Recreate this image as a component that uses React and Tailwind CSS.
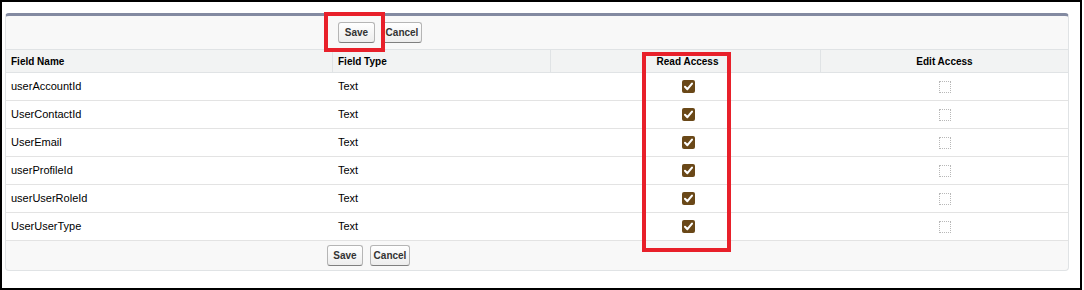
import React from "react"

const fields = [
  { name: "userAccountId", type: "Text" },
  { name: "UserContactId", type: "Text" },
  { name: "UserEmail", type: "Text" },
  { name: "userProfileId", type: "Text" },
  { name: "userUserRoleId", type: "Text" },
  { name: "UserUserType", type: "Text" },
]

const Btn = ({ children, w }) => (
  <button
    type="button"
    className={`${w} h-[21px] rounded-[3px] border border-[#b5b5b5] border-b-[#7f7f7f] bg-gradient-to-b from-white to-[#ededed] text-[10px] font-bold text-[#333] flex items-center justify-center`}
  >
    {children}
  </button>
)

const CheckedBox = () => (
  <svg width="13" height="13" viewBox="0 0 13 13">
    <rect x="0" y="0" width="13" height="13" rx="2" fill="#6a4818" />
    <path d="M3 6.8 L5.4 9.2 L10 3.6" fill="none" stroke="#fff" strokeWidth="2.1" strokeLinecap="round" strokeLinejoin="round" />
  </svg>
)

const DisabledBox = () => <div className="w-[12px] h-[12px] border border-dotted border-[#b8b8b8]" />

export default function App() {
  return (
    <div
      className="relative w-[1082px] h-[290px] border-2 border-black bg-white pl-[3px] pt-[11px]"
      style={{ fontFamily: '"Liberation Sans", Arial, sans-serif' }}
    >
      {/* Panel */}
      <div className="w-[1064px] rounded-[4px] border border-[#e0e3e5] border-t-[3px] border-t-[#838aa1] bg-[#f8f8f8] overflow-hidden">
        {/* Top buttons */}
        <div className="h-[34px] border-b border-[#e0e3e5] flex items-start pt-[6px] pl-[332px] gap-[7px]">
          <Btn w="w-[37px]">Save</Btn>
          <Btn w="w-[40px]">Cancel</Btn>
        </div>

        {/* Header */}
        <div className="grid grid-cols-[327px_218px_270px_1fr] h-[23px] bg-[#f2f3f3] border-b border-[#e0e3e5] text-[10px] font-bold text-black">
          <div className="flex items-center pl-[5px] border-r border-[#e0e3e5]">Field Name</div>
          <div className="flex items-center pl-[5px] border-r border-[#e0e3e5]">Field Type</div>
          <div className="flex items-center justify-center pl-[4px] border-r border-[#e0e3e5]">Read Access</div>
          <div className="flex items-center justify-center">Edit Access</div>
        </div>

        {/* Rows */}
        {fields.map((f) => (
          <div
            key={f.name}
            className="grid grid-cols-[327px_218px_270px_1fr] h-[28px] bg-white border-b border-[#e3e3e3] text-[11px] text-black"
          >
            <div className="flex items-center pl-[5px]">{f.name}</div>
            <div className="flex items-center pl-[5px]">{f.type}</div>
            <div className="flex items-center justify-center pl-[4px]">
              <CheckedBox />
            </div>
            <div className="flex items-center justify-center">
              <DisabledBox />
            </div>
          </div>
        ))}

        {/* Bottom buttons */}
        <div className="h-[29px] flex items-start pt-[4px] pl-[321px] gap-[7px]">
          <Btn w="w-[36px]">Save</Btn>
          <Btn w="w-[40px]">Cancel</Btn>
        </div>
      </div>

      {/* Red highlight boxes */}
      <div className="absolute left-[322px] top-[10px] w-[61px] h-[40px] border-4 border-[#e8202a] pointer-events-none" />
      <div className="absolute left-[640px] top-[50px] w-[89px] h-[200px] border-4 border-[#e8202a] pointer-events-none" />
    </div>
  )
}
